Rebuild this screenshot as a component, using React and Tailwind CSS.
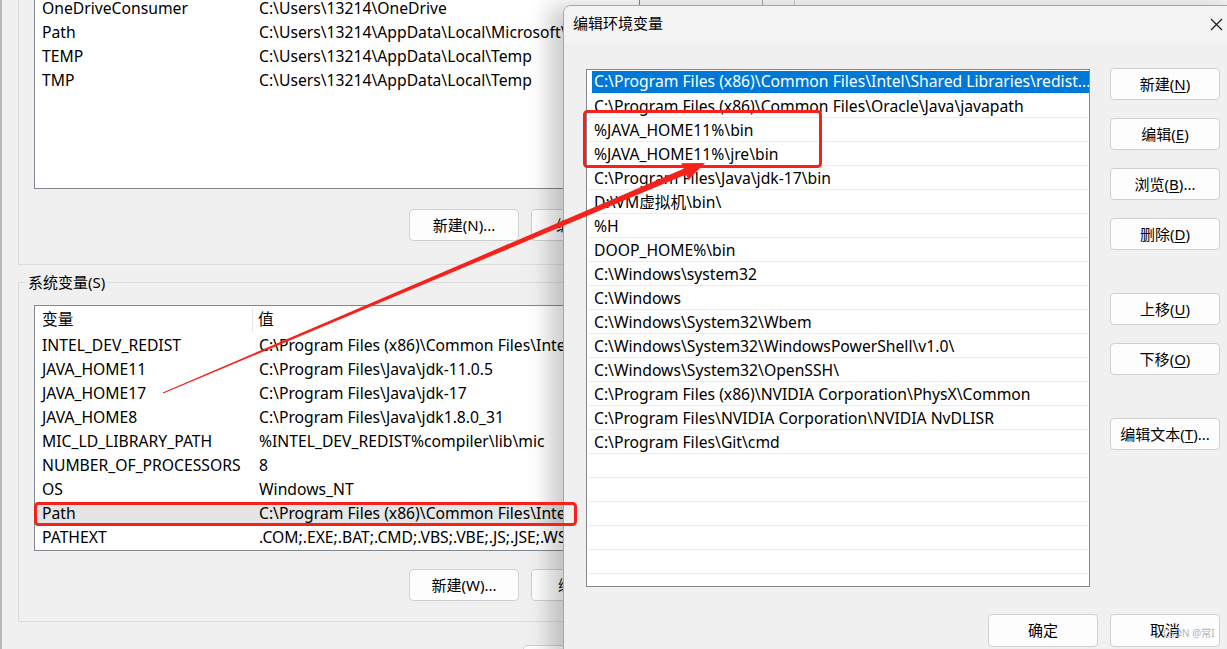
const userRows = [
  ["OneDriveConsumer", "C:\\Users\\13214\\OneDrive"],
  ["Path", "C:\\Users\\13214\\AppData\\Local\\Microsoft\\WindowsApps;"],
  ["TEMP", "C:\\Users\\13214\\AppData\\Local\\Temp"],
  ["TMP", "C:\\Users\\13214\\AppData\\Local\\Temp"],
];

const sysRows = [
  ["INTEL_DEV_REDIST", "C:\\Program Files (x86)\\Common Files\\Intel\\Shared Libraries\\"],
  ["JAVA_HOME11", "C:\\Program Files\\Java\\jdk-11.0.5"],
  ["JAVA_HOME17", "C:\\Program Files\\Java\\jdk-17"],
  ["JAVA_HOME8", "C:\\Program Files\\Java\\jdk1.8.0_31"],
  ["MIC_LD_LIBRARY_PATH", "%INTEL_DEV_REDIST%compiler\\lib\\mic"],
  ["NUMBER_OF_PROCESSORS", "8"],
  ["OS", "Windows_NT"],
  ["Path", "C:\\Program Files (x86)\\Common Files\\Intel\\Shared Libraries\\redist"],
  ["PATHEXT", ".COM;.EXE;.BAT;.CMD;.VBS;.VBE;.JS;.JSE;.WSF;.WSH;.MSC"],
];

const paths = [
  "C:\\Program Files (x86)\\Common Files\\Intel\\Shared Libraries\\redist...",
  "C:\\Program Files (x86)\\Common Files\\Oracle\\Java\\javapath",
  "%JAVA_HOME11%\\bin",
  "%JAVA_HOME11%\\jre\\bin",
  "C:\\Program Files\\Java\\jdk-17\\bin",
  "D:\\VM虚拟机\\bin\\",
  "%H",
  "DOOP_HOME%\\bin",
  "C:\\Windows\\system32",
  "C:\\Windows",
  "C:\\Windows\\System32\\Wbem",
  "C:\\Windows\\System32\\WindowsPowerShell\\v1.0\\",
  "C:\\Windows\\System32\\OpenSSH\\",
  "C:\\Program Files (x86)\\NVIDIA Corporation\\PhysX\\Common",
  "C:\\Program Files\\NVIDIA Corporation\\NVIDIA NvDLISR",
  "C:\\Program Files\\Git\\cmd",
  "", "", "", "", "", "",
];

function Btn({ children, className = "" }) {
  return (
    <div
      className={`flex items-center justify-center h-[32px] w-[110px] shrink-0 rounded-[4px] border border-[#d0d0d0] bg-[#fdfdfd] text-[15px] text-black ${className}`}
    >
      {children}
    </div>
  );
}

function Key({ k }) {
  return (
    <>
      (<span className="underline underline-offset-2">{k}</span>)
    </>
  );
}

export default function App() {
  return (
    <div className="relative w-[1227px] h-[649px] overflow-hidden bg-[#fafafa] font-['Noto_Sans','Noto_Sans_CJK_SC',sans-serif] text-black">
      {/* background window strip above the dialog */}
      <div className="absolute top-0 left-[762px] w-px h-[6px] bg-[#a8a8a8]" />
      <div className="absolute top-0 left-[794px] w-px h-[6px] bg-[#d0d0d0]" />

      {/* environment variables window (behind) */}
      <div className="absolute left-0 top-0 w-[640px] h-[649px] bg-[#f0f0f0] border-l-2 border-[#b9b9b9]">
        {/* user variables group */}
        <div className="ml-[16px] -mt-[10px] h-[270px] border-l border-b border-[#dcdcdc]">
          <div className="ml-[15px] mt-[5px] h-[194px] border border-[#828790] bg-white pt-px pl-[7px] text-[15.7px]">
            {userRows.map(([k, v]) => (
              <div key={k} className="grid grid-cols-[217px_1fr] h-[24px] items-center whitespace-nowrap">
                <span>{k}</span>
                <span>{v}</span>
              </div>
            ))}
          </div>
          <div className="flex gap-[12px] ml-[390px] mt-[20px]">
            <Btn>新建(N)...</Btn>
            <Btn>编辑(E)...</Btn>
          </div>
        </div>

        {/* system variables group */}
        <fieldset className="ml-[16px] mt-[7px] border border-r-0 border-[#dcdcdc] pb-[20px]">
          <legend className="ml-[7px] px-[2px] text-[15px] leading-[20px]">系统变量(S)</legend>
          <div className="ml-[15px] mt-[13px] h-[246px] border border-[#828790] bg-white text-[15.7px]">
            <div className="grid grid-cols-[211px_1fr] h-[28px] items-center pl-[7px]">
              <span className="h-[24px] flex items-center border-r border-[#e5e5e5]">变量</span>
              <span className="pl-[5px]">值</span>
            </div>
            {sysRows.map(([k, v]) => (
              <div
                key={k}
                className={`grid grid-cols-[217px_1fr] h-[24px] items-center pl-[7px] whitespace-nowrap ${k === "Path" ? "bg-[#e5e5e5]" : ""}`}
              >
                <span>{k}</span>
                <span>{v}</span>
              </div>
            ))}
          </div>
          <div className="flex gap-[12px] ml-[390px] mt-[18px]">
            <Btn>新建(W)...</Btn>
            <Btn>编辑(I)...</Btn>
          </div>
        </fieldset>
        <div className="ml-[521px] mt-[23px] flex">
          <Btn>确定</Btn>
        </div>
      </div>

      {/* edit environment variable dialog */}
      <div className="absolute left-[563px] top-[5px] w-[680px] h-[660px] rounded-tl-[8px] border border-[#a6a6a6] bg-[#f0f0f0] shadow-[-14px_0_22px_rgba(0,0,0,0.2)] overflow-hidden">
        <div className="flex items-center justify-between h-[38px] bg-[#f3f3f3] pl-[9px] pr-[19px] pb-[4px]">
          <span className="text-[15px]">编辑环境变量</span>
          <svg width="13" height="13" viewBox="0 0 13 13" className="text-[#1a1a1a] mt-[2px]">
            <path d="M1 1 L12 12 M12 1 L1 12" stroke="currentColor" strokeWidth="1.2" />
          </svg>
        </div>
        <div className="flex gap-[20px] pl-[22px] mt-[25px]">
          <div className="w-[504px] h-[518px] border border-[#828790] bg-white px-px overflow-hidden text-[15.7px]">
            {paths.map((p, i) => (
              <div key={i} className="h-[24px] border-b border-[#ececec] flex items-center whitespace-nowrap">
                {i === 0 ? (
                  <span className="flex items-center h-[22px] w-full ml-[4px] mr-px pl-[2px] pt-px bg-[#0078d7] text-white">
                    {p}
                  </span>
                ) : (
                  <span className="pl-[6px] pt-[2px]">{p}</span>
                )}
              </div>
            ))}
          </div>
          <div className="flex flex-col -mt-px">
            <Btn>新建<Key k="N" /></Btn>
            <Btn className="mt-[18px]">编辑<Key k="E" /></Btn>
            <Btn className="mt-[18px]">浏览<Key k="B" />...</Btn>
            <Btn className="mt-[18px]">删除<Key k="D" /></Btn>
            <Btn className="mt-[43px]">上移<Key k="U" /></Btn>
            <Btn className="mt-[18px]">下移<Key k="O" /></Btn>
            <Btn className="mt-[43px]">编辑文本<Key k="T" />...</Btn>
          </div>
        </div>
        <div className="flex gap-[12px] pl-[424px] mt-[27px]">
          <Btn className="h-[33px] border-[#0067c0]">确定</Btn>
          <Btn className="h-[33px]">取消</Btn>
        </div>
      </div>

      {/* annotations */}
      <svg className="absolute inset-0 pointer-events-none" width="1227" height="649" viewBox="0 0 1227 649">
        <rect x="35.5" y="503.5" width="540" height="21" rx="3" fill="none" stroke="#f5221b" strokeWidth="3" />
        <rect x="584.5" y="111.5" width="236" height="55" rx="3" fill="none" stroke="#f5221b" strokeWidth="3" />
        <polygon
          points="162.8,392.5 683.6,168.8 681.3,163.3 705,163 688.3,179.9 686,174.4 163.2,393.5"
          fill="#f5221b"
        />
      </svg>
      <span className="absolute left-[1163px] top-[626px] text-[10px] text-[#b4b4b4] whitespace-nowrap">CSDN @常I</span>
    </div>
  );
}
